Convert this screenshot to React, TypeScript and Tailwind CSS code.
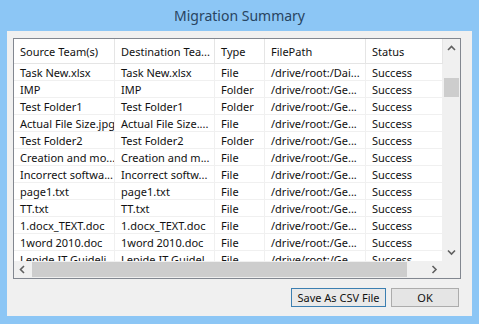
const columns = [
  { label: 'Source Team(s)', width: 'w-[101px]' },
  { label: 'Destination Tea...', width: 'w-[100px]' },
  { label: 'Type', width: 'w-[50px]' },
  { label: 'FilePath', width: 'w-[101px]' },
  { label: 'Status', width: 'w-[77px]' },
];

const rows = [
  ['Task New.xlsx', 'Task New.xlsx', 'File', '/drive/root:/Dai...', 'Success'],
  ['IMP', 'IMP', 'Folder', '/drive/root:/Ge...', 'Success'],
  ['Test Folder1', 'Test Folder1', 'Folder', '/drive/root:/Ge...', 'Success'],
  ['Actual File Size.jpg', 'Actual File Size....', 'File', '/drive/root:/Ge...', 'Success'],
  ['Test Folder2', 'Test Folder2', 'Folder', '/drive/root:/Ge...', 'Success'],
  ['Creation and mo...', 'Creation and m...', 'File', '/drive/root:/Ge...', 'Success'],
  ['Incorrect softwa...', 'Incorrect softw...', 'File', '/drive/root:/Ge...', 'Success'],
  ['page1.txt', 'page1.txt', 'File', '/drive/root:/Ge...', 'Success'],
  ['TT.txt', 'TT.txt', 'File', '/drive/root:/Ge...', 'Success'],
  ['1.docx_TEXT.doc', '1.docx_TEXT.doc', 'File', '/drive/root:/Ge...', 'Success'],
  ['1word 2010.doc', '1word 2010.doc', 'File', '/drive/root:/Ge...', 'Success'],
  ['Lepide IT Guideli...', 'Lepide IT Guidel...', 'File', '/drive/root:/Ge...', 'Success'],
];

// small scrollbar chevron
function Arrow({ dir }: { dir: 'up' | 'down' | 'left' | 'right' }) {
  const pts = {
    up: '1,5 4.5,1.5 8,5',
    down: '1,1.5 4.5,5 8,1.5',
    left: '5,1 1.5,4.5 5,8',
    right: '1.5,1 5,4.5 1.5,8',
  }[dir];
  const vertical = dir === 'up' || dir === 'down';
  return (
    <svg width={vertical ? 9 : 7} height={vertical ? 7 : 9} viewBox={vertical ? '0 0 9 7' : '0 0 7 9'}>
      <polyline points={pts} fill="none" stroke="#606060" strokeWidth={1.6} />
    </svg>
  );
}

export default function App() {
  return (
    <div
      className="w-[479px] h-[324px] bg-[#8cc6f5] flex flex-col text-[11px] text-[#111]"
      style={{ fontFamily: '"Noto Sans", "Open Sans", sans-serif' }}
    >
      <div className="h-[31px] flex items-center justify-center text-[14px] text-[#284461] pb-[1px]">
        Migration Summary
      </div>

      <div className="mx-[7px] mb-[8px] flex-1 bg-[#f0f0f0] pt-[7px] pl-[6px] pr-[11px]">
        <div className="w-[448px] h-[241px] border border-[#828790] bg-white flex">
          <div className="w-[429px] flex flex-col">
            <div className="h-[222px] overflow-hidden">
              <div className="flex h-[25px] border-b border-[#e5e5e5]">
                {columns.map((c) => (
                  <div
                    key={c.label}
                    className={`${c.width} shrink-0 border-r border-[#e5e5e5] pl-[6px] pt-[2px] flex items-center whitespace-nowrap overflow-hidden`}
                  >
                    {c.label}
                  </div>
                ))}
              </div>
              {rows.map((r, i) => (
                <div key={i} className="flex h-[17px] border-b border-[#f0f0f0]">
                  {r.map((cell, j) => (
                    <div
                      key={j}
                      className={`${columns[j].width} shrink-0 border-r border-[#f0f0f0] pl-[6px] pt-[1px] flex items-center whitespace-nowrap overflow-hidden leading-none`}
                    >
                      {cell}
                    </div>
                  ))}
                </div>
              ))}
            </div>

            <div className="h-[17px] bg-[#f0f0f0] flex items-center">
              <div className="w-[17px] h-[17px] flex items-center justify-center">
                <Arrow dir="left" />
              </div>
              <div className="ml-[1px] w-[375px] h-[15px] bg-[#cdcdcd]" />
              <div className="flex-1" />
              <div className="w-[17px] h-[17px] flex items-center justify-center">
                <Arrow dir="right" />
              </div>
            </div>
          </div>

          <div className="w-[17px] flex flex-col bg-[#f0f0f0]">
            <div className="h-[222px] flex flex-col items-center">
              <div className="h-[17px] w-full flex items-center justify-center pt-[2px]">
                <Arrow dir="up" />
              </div>
              <div className="mt-[22px] w-[15px] h-[19px] bg-[#cdcdcd]" />
              <div className="flex-1" />
              <div className="h-[17px] w-full flex items-center justify-center">
                <Arrow dir="down" />
              </div>
            </div>
            <div className="h-[17px]" />
          </div>
        </div>

        <div className="mt-[9px] w-[448px] flex justify-end gap-[5px] pr-[2px]">
          <button className="w-[95px] h-[19px] border border-[#3c7fb1] bg-[#e9e9e9] flex items-center justify-center leading-none">
            Save As CSV File
          </button>
          <button className="w-[68px] h-[19px] border border-[#acacac] bg-[#e5e5e5] flex items-center justify-center leading-none">
            OK
          </button>
        </div>
      </div>
    </div>
  );
}
